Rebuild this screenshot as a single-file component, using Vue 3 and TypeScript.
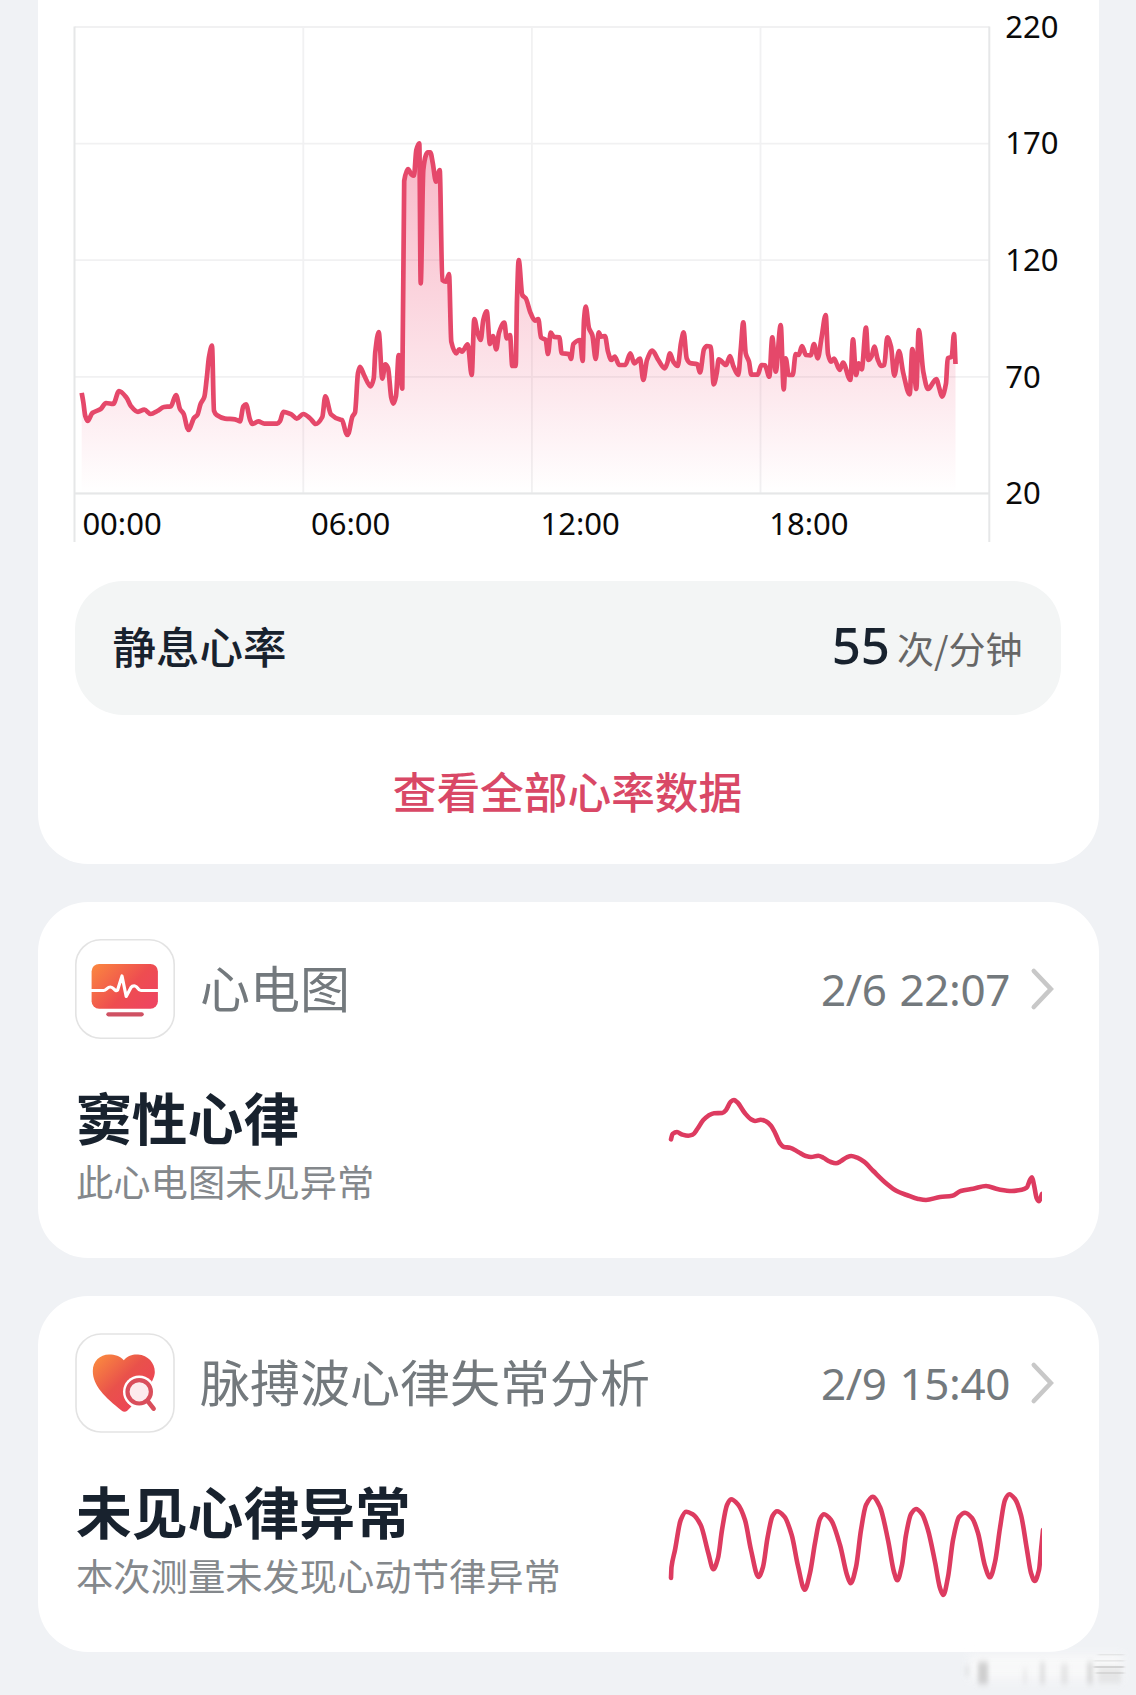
<script setup lang="ts">
type Point = [number, number]

const parse = (src: string): Point[] =>
  src.trim().split(/\s+/).map((pair) => pair.split(',').map(Number) as Point)

/* Monotone cubic interpolation, so that peaks are never overshot. */
function smooth(points: Point[]): string {
  const n = points.length
  const slope: number[] = []
  for (let i = 0; i < n - 1; i++) {
    slope.push((points[i + 1][1] - points[i][1]) / (points[i + 1][0] - points[i][0]))
  }
  const tangent = points.map((_, i) => {
    if (i === 0) return slope[0]
    if (i === n - 1) return slope[n - 2]
    const a = slope[i - 1]
    const b = slope[i]
    return a * b <= 0 ? 0 : (2 * a * b) / (a + b)
  })
  let d = `M${points[0][0]},${points[0][1]}`
  for (let i = 0; i < n - 1; i++) {
    const [x0, y0] = points[i]
    const [x1, y1] = points[i + 1]
    const h = (x1 - x0) / 3
    d += `C${(x0 + h).toFixed(2)},${(y0 + tangent[i] * h).toFixed(2)} ${(x1 - h).toFixed(2)},${(y1 - tangent[i + 1] * h).toFixed(2)} ${x1},${y1}`
  }
  return d
}

const heartRate = parse(`
81.7,392.9 83.3,402 85.3,416 87.7,421 92.3,413 100.7,409 106,403 113.3,404 119,391 126.7,398
130.7,405.7 138,411.8 144.3,409.6 150.7,414 157.3,411 164,407 170.7,406.4 176,395 180,409 183.7,414
187.3,428 188.7,430 190,428 194,418 197.3,415 200.7,403.6 204.3,397 206.7,378.6 209,357 212,345.7 214,410.7
216.7,415 225,418.6 235,419.3 240,421.4 243.3,406.4 246,404.3 250,419.6 252.3,424 258.3,421.4 264.3,423.6
277.3,423.6 280,421 283.3,411.8 291.7,414.6 296.7,418.6 303.3,414 310.7,419 315.7,424 322.3,417 325.3,396.4
331,414.3 340,419.6 342,420 346,433 347.4,435 348.7,433 352.3,416.8 355,412.5 358,373 360,366.8 364.3,375.7
370.7,386.4 373.7,378.6 375.3,351.8 378.7,332 382.3,378.6 385.3,364.3 388,367.9 391.3,398 393.3,403.6 396,396
398.7,355 402.3,388.6 404.2,181 408,169 411.3,174.3 414,175.7 416.3,150 419.3,143.3 420.7,283.3 423.3,170
426,155 427.7,152.3 430.3,152.3 432.7,162.7 436,181.7 439.7,170 442.3,280 446,281.7 449,274 451.3,341.7
456.3,353.3 459.3,349.3 462,351.7 467.7,344.3 471.7,375 474.3,319 477.7,333.3 480.7,340 483.3,320 486.7,311.3
490,344 493,336 496.3,349.3 499,332.7 504.3,322.7 506.7,338.3 510,335 512.3,366 515.7,366 517,300
518.7,260 522.3,295 525.7,298.3 530.7,313.3 535,320.7 538.3,319 541,337.3 545.7,340 548,354 550.7,332.7
554,337 559.3,337.3 561.7,353.3 569,354 571,359 573.3,344 580,340 582.7,361 584,320 585.7,306.7
589,328.3 592.3,335 595.7,359 598.7,332.3 601,336.7 605,336 608,351.7 611.3,360 614.7,356.7 619.3,365
625.3,365 630.3,353.3 634.3,363.3 640,358.7 643.3,380 647,360 652.3,350.7 658.3,360 664.7,368.3 667.3,363
670,353.3 673.3,361.7 677.7,366 681,343 683.7,332.3 686.7,358.3 690,363 697.3,364.3 700,372.5 704,349.3
706.7,346 710.7,346.7 713.7,384.3 716.7,373.3 718.7,359.3 726,365 730,356 733.3,366 738.3,375 740.7,350
743.3,322.3 745.7,353.3 749,361.7 751.3,374.7 757.7,374.7 761.3,365 765,365.3 769.3,376.7 772.3,337.3 775.7,371.7
780.7,325 783.7,389.3 785.7,358.3 788.7,375 792.7,375 795.7,354 798.7,355 802,346 806,355 810.7,355.3
814,344 817.7,358.3 821.7,336.7 825.7,315 828,354 831,361.7 834,358.7 839.7,370 843,362.7 850.3,380
853,339.3 856,375 858.7,363.3 861.7,369.3 866,327.7 868.3,360 871.7,356 874.3,346.7 877.7,359.3 881,366
884.3,365 887.3,337.3 891,346.7 894.3,375.7 899,351 903.3,373.3 909.7,394.3 912.3,349 916.3,389 918.7,330
923.3,371.7 928,389 936.3,379 939.3,388.3 942,396.7 946,383.3 947.7,358.3 951.7,356.7 954,334 955.5,364
`)
const heartLine = smooth(heartRate)
const heartArea = `${heartLine}L955.5,493L81.7,493Z`

const levels = [
  { label: '220', y: 27 },
  { label: '170', y: 143.6 },
  { label: '120', y: 260.2 },
  { label: '70', y: 376.8 },
  { label: '20', y: 493.4 },
]
const hours = ['00:00', '06:00', '12:00', '18:00'].map((label, i) => ({ label, x: 74.7 + i * 228.6 }))

const ecgLine = smooth(parse(`
671,1139.3 672.5,1134 677,1132 682,1134.5 688.3,1135.7 692.7,1134.7 697.3,1129 703.3,1120 708.3,1115.7 714,1113.3
722.3,1113 726,1110 730.7,1101.7 734,1100 737.3,1102.3 745,1113.3 751,1119.3 755,1121 760.7,1119.7 766,1121.3
771,1125.7 775,1132.7 780,1143.3 784,1147 790,1147.7 798.3,1152 805.7,1156 811,1157 818.3,1155.7 823.3,1157.7
830,1161.7 836,1163.3 840.7,1161.3 846.7,1157.3 851.3,1156 857.3,1157.7 864,1161.7 873.3,1171 886.7,1183.7 896.7,1191
906.7,1195 918.3,1199 926,1200 940,1197 952.3,1195.7 960.7,1191 973.3,1188.7 986,1186 998.3,1189.3 1011.7,1191
1021.7,1189.7 1026.7,1187.7 1030,1180 1032,1177.3 1034,1185 1036.7,1198.3 1039,1201.3 1042,1194
`))
const pulseLine = smooth(parse(`
671,1578 671.5,1567 675,1550 680.7,1520 686,1511.7 692.7,1514.3 700.7,1525 708.3,1553 713.3,1569.3 718,1558
722,1530 727,1505 731,1499.3 738,1504.5 745,1520 751,1550 758.5,1577 763,1567 767.5,1538 772.5,1516
777,1511.3 784.3,1516.5 791.7,1535 798,1566 804.7,1589.7 810,1573 815,1543 820,1519 824,1514.3 831,1520
840,1545 847,1575 850.7,1583.3 856,1567 861,1530 866,1505 872.7,1496.7 880,1507 888,1540 894,1572
897.3,1580.3 902,1565 906,1535 911,1514 916,1509 922,1514 928,1530 935,1562 940,1588 943.3,1595
948,1577 953,1540 959,1517 965,1512.7 972,1518 978,1533 985,1566 990,1577.3 995,1562 1000,1528
1005,1500 1009.3,1494.3 1015,1499 1021,1515 1027,1550 1031,1573 1034.7,1581 1039,1570 1041,1550 1043,1530
`))

const cards = [
  {
    kind: 'ecg',
    title: '心电图',
    time: '2/6 22:07',
    result: '窦性心律',
    note: '此心电图未见异常',
    line: ecgLine,
    viewBox: '668 1088 374 124',
  },
  {
    kind: 'pulse',
    title: '脉搏波心律失常分析',
    time: '2/9 15:40',
    result: '未见心律异常',
    note: '本次测量未发现心动节律异常',
    line: pulseLine,
    viewBox: '668 1482 374 124',
  },
]
</script>

<template>
  <main class="page">
    <section class="card rate">
      <svg class="chart" viewBox="38 0 1061 560" width="1061" height="560">
        <defs>
          <linearGradient id="rateFill" x1="0" y1="143" x2="0" y2="493" gradientUnits="userSpaceOnUse">
            <stop offset="0" stop-color="#ee4b72" stop-opacity="0.4" />
            <stop offset="0.4" stop-color="#ee4b72" stop-opacity="0.25" />
            <stop offset="0.7" stop-color="#ee4b72" stop-opacity="0.13" />
            <stop offset="1" stop-color="#ee4b72" stop-opacity="0" />
          </linearGradient>
        </defs>
        <g class="grid">
          <line v-for="l in levels" :key="l.label" x1="74.7" x2="989.3" :y1="l.y" :y2="l.y" />
          <line v-for="h in hours.slice(1)" :key="h.label" :x1="h.x" :x2="h.x" y1="27" y2="493" />
        </g>
        <path class="axis" d="M74.5,26.5V542M989.3,26.5V542M74.7,493.4H989.3" />
        <path :d="heartArea" fill="url(#rateFill)" />
        <path class="trace" :d="heartLine" />
        <g class="labels">
          <text v-for="l in levels" :key="l.label" x="1005.2" :y="l.y + 10.8">{{ l.label }}</text>
          <text v-for="(h, i) in hours" :key="h.label" :x="h.x + 7.7 + (i > 1 ? 1 : 0)" y="535">{{ h.label }}</text>
        </g>
      </svg>
      <div class="resting">
        <span class="resting-name">静息心率</span>
        <span class="resting-value"><b>55</b><small>次/分钟</small></span>
      </div>
      <a class="all">查看全部心率数据</a>
    </section>

    <section v-for="c in cards" :key="c.kind" class="card item">
      <header class="head">
        <svg v-if="c.kind === 'ecg'" class="icon" viewBox="0 0 100 100" width="100" height="100">
          <defs>
            <linearGradient id="ecgFill" x1="0" y1="0.1" x2="1" y2="0.75">
              <stop offset="0" stop-color="#fa8440" />
              <stop offset="0.6" stop-color="#ee4d50" />
              <stop offset="1" stop-color="#ee4560" />
            </linearGradient>
          </defs>
          <rect class="frame" x="0.8" y="0.8" width="98.4" height="98.4" rx="25" />
          <rect x="16.6" y="24.9" width="66.3" height="44.8" rx="7.5" fill="url(#ecgFill)" />
          <path class="beat" d="M16,51.5H28.5C31.5,51.5 32,48 35.5,48C39,48 40,53.5 42.6,51L47,37L51.2,57.5L56,48.5C57,47 58,46.8 60,47C63,47.5 62.5,51.5 66,51.5H84" />
          <rect x="31.3" y="73.2" width="37.5" height="4.2" rx="2.1" fill="#cf5163" />
        </svg>
        <svg v-else class="icon" viewBox="0 0 100 100" width="100" height="100">
          <defs>
            <linearGradient id="heartFill" x1="0" y1="0.15" x2="0.8" y2="0.9">
              <stop offset="0" stop-color="#f98640" />
              <stop offset="0.5" stop-color="#e9514b" />
              <stop offset="1" stop-color="#ee4358" />
            </linearGradient>
            <mask id="lensCut">
              <rect width="100" height="100" fill="#fff" />
              <circle cx="64.2" cy="58.8" r="16.2" fill="#000" />
              <path d="M54,71L62,79L72,74V62H60Z" fill="#000" />
            </mask>
          </defs>
          <rect class="frame" x="1" y="1" width="98" height="98" rx="25" stroke-width="2" />
          <path d="M48.8,27.3C53,22.3 58,21.3 63,21.6C73,22.3 79.8,30 79.8,39C79.8,45 75,56 52.5,77.5Q49.5,80 46.5,77.5C30,64 17.8,53 17.8,38C17.8,28.3 25,21.6 34,21.6C40,21.6 45,23 48.8,27.3Z" fill="url(#heartFill)" mask="url(#lensCut)" />
          <circle cx="64.2" cy="58.8" r="11.7" fill="#fdebed" stroke="#d94e5b" stroke-width="4.2" />
          <path d="M72.5,67.8L78.6,75.6" fill="none" stroke="#d94e5b" stroke-width="4.6" stroke-linecap="round" />
        </svg>
        <h2>{{ c.title }}</h2>
        <time>{{ c.time }}</time>
        <svg class="chevron" viewBox="0 0 24 44" width="24" height="44">
          <path d="M3.8,4L20.8,22L3.8,40" />
        </svg>
      </header>
      <div class="body">
        <div class="copy">
          <strong>{{ c.result }}</strong>
          <p>{{ c.note }}</p>
        </div>
        <svg class="spark" :viewBox="c.viewBox" width="374" height="124">
          <path :d="c.line" />
        </svg>
      </div>
    </section>

    <svg class="smudge" viewBox="0 0 180 50" width="180" height="50" aria-hidden="true">
      <defs>
        <filter id="haze" x="-20%" y="-40%" width="140%" height="180%">
          <feGaussianBlur stdDeviation="4 4" />
        </filter>
        <filter id="fine" x="-30%" y="-30%" width="160%" height="160%">
          <feGaussianBlur stdDeviation="2 3" />
        </filter>
        <filter id="thin" x="-20%" y="-40%" width="140%" height="180%">
          <feGaussianBlur stdDeviation="1.5 0.5" />
        </filter>
      </defs>
      <rect x="14" y="13" width="152" height="24" fill="#fafafa" opacity="0.85" filter="url(#haze)" />
      <g fill="#b8b8b8" filter="url(#fine)">
        <rect x="22" y="20" width="10" height="22" opacity="0.65" />
        <rect x="9" y="24" width="4" height="10" opacity="0.3" />
        <rect x="67" y="26" width="4" height="16" opacity="0.2" />
        <rect x="84" y="20" width="5" height="22" opacity="0.38" />
        <rect x="105" y="22" width="7" height="20" opacity="0.3" />
        <rect x="131" y="20" width="6" height="22" opacity="0.45" />
        <rect x="142" y="25" width="23" height="16" opacity="0.28" />
      </g>
      <g fill="#c0c0c0" opacity="0.6" filter="url(#thin)">
        <rect x="142" y="12" width="26" height="1.4" opacity="0.5" />
        <rect x="138" y="18" width="30" height="1.6" opacity="0.5" />
        <rect x="138" y="24" width="30" height="2" />
        <rect x="140" y="30" width="28" height="2" opacity="0.7" />
      </g>
    </svg>
  </main>
</template>

<style>
body {
  margin: 0;
  background: #f0f2f5;
}
</style>

<style scoped>
.page {
  position: relative;
  box-sizing: border-box;
  width: 1136px;
  height: 1695px;
  padding: 0 37px 0 38px;
  display: flex;
  flex-direction: column;
  gap: 38px;
  overflow: hidden;
  background: #f0f2f5;
  font-family: 'Noto Sans CJK SC', 'Noto Sans', sans-serif;
}

.card {
  box-sizing: border-box;
  width: 1061px;
  background: #fff;
  border-radius: 50px;
}

.rate {
  height: 864px;
  flex: none;
  display: flex;
  flex-direction: column;
  align-items: center;
  padding-right: 2px;
  border-radius: 0 0 50px 50px;
}

.chart {
  display: block;
  flex: none;
  align-self: flex-start;
}

.grid line {
  stroke: #f1f1f2;
  stroke-width: 1.8;
}

.axis {
  fill: none;
  stroke: #e6e7e8;
  stroke-width: 2;
}

.trace {
  fill: none;
  stroke: #e5486a;
  stroke-width: 4.7;
  stroke-linejoin: round;
}

.labels {
  font-family: 'Noto Sans', sans-serif;
  font-size: 31px;
  fill: #0a0a0a;
}

.resting {
  box-sizing: border-box;
  width: 986px;
  height: 134px;
  margin-top: 21px;
  padding: 0 38px 4px;
  display: flex;
  align-items: center;
  justify-content: space-between;
  border-radius: 48px;
  background: #f3f5f5;
}

.resting-name {
  font-size: 43.5px;
  line-height: 60px;
  font-weight: 500;
  color: #18222e;
}

.resting-value {
  display: flex;
  align-items: baseline;
  line-height: 60px;
}

.resting-value b {
  font-family: 'Noto Sans', sans-serif;
  font-size: 51px;
  font-weight: 500;
  color: #18222e;
}

.resting-value small {
  margin-left: 7px;
  font-size: 37px;
  color: #666;
}

.all {
  margin-top: 45px;
  font-size: 43.7px;
  line-height: 60px;
  font-weight: 500;
  color: #d94866;
}

.item {
  height: 356px;
  flex: none;
  padding: 37px 45px 0 37px;
}

.head {
  display: flex;
  align-items: center;
  height: 100px;
}

.icon {
  flex: none;
}

.frame {
  fill: #fff;
  stroke: #e3e3e3;
  stroke-width: 1.6;
}

.beat {
  fill: none;
  stroke: #fff;
  stroke-width: 3.2;
  stroke-linejoin: round;
}

.head h2 {
  flex: 1;
  margin: 0 0 7px 25px;
  font-size: 50px;
  line-height: 70px;
  font-weight: 400;
  color: #73797d;
}

.head time {
  margin-bottom: 1px;
  font-family: 'Noto Sans', sans-serif;
  font-size: 44px;
  line-height: 70px;
  letter-spacing: -0.4px;
  word-spacing: 2px;
  color: #73797d;
}

.chevron {
  flex: none;
  margin-left: 20px;
}

.chevron path {
  fill: none;
  stroke: #c8c8c8;
  stroke-width: 4.6;
  stroke-linecap: round;
}

.body {
  display: flex;
  justify-content: space-between;
  margin-top: 49px;
  padding-right: 12px;
}

.copy {
  margin-top: -3px;
  padding-left: 1px;
}

.copy strong {
  display: block;
  font-size: 55.8px;
  line-height: 62px;
  font-weight: 700;
  color: #18222e;
}

.copy p {
  margin: 9px 0 0;
  font-size: 37.3px;
  line-height: 50px;
  color: #84888c;
}

.spark {
  display: block;
  flex: none;
}

.spark path {
  fill: none;
  stroke: #dd3b60;
  stroke-width: 4.6;
  stroke-linejoin: round;
  stroke-linecap: round;
}

.smudge {
  position: absolute;
  left: 956px;
  top: 1642px;
}
</style>
